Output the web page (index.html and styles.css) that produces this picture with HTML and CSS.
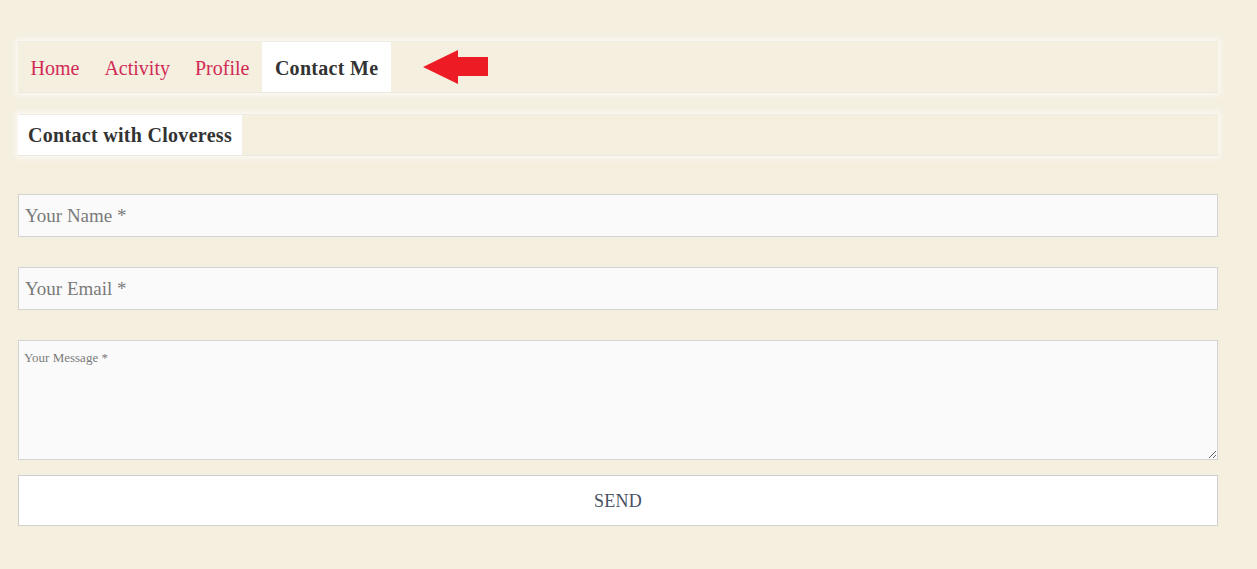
FILE: index.html
```html
<!DOCTYPE html>
<html>
<head>
<meta charset="utf-8">
<link rel="stylesheet" href="styles.css">
</head>
<body>
<div class="page">
  <div class="navwrap">
    <nav class="nav">
      <a class="nav-item">Home</a>
      <a class="nav-item">Activity</a>
      <a class="nav-item">Profile</a>
      <a class="nav-item active">Contact Me</a>
    </nav>
    <svg class="arrow" width="66" height="34" viewBox="0 0 66 34">
      <polygon points="0,17 35,0 35,7 65,7 65,26 35,26 35,34" fill="#ed1c24"/>
    </svg>
  </div>
  <div class="titlebar"><h2 class="title">Contact with Cloveress</h2></div>
  <form class="form">
    <input class="field" type="text" placeholder="Your Name *">
    <input class="field" type="text" placeholder="Your Email *">
    <textarea class="field message" placeholder="Your Message *"></textarea>
    <button class="send" type="button">SEND</button>
  </form>
</div>
</body>
</html>
```
FILE: styles.css
```css
html, body {
  margin: 0;
  padding: 0;
  background: #f5efe0;
}
body {
  font-family: "Liberation Serif", "Times New Roman", serif;
}
.page {
  width: 1200px;
  margin-left: 18px;
  padding-top: 41px;
}
.navwrap {
  position: relative;
}
.nav {
  display: flex;
  height: 50px;
  border-top: 1px solid #efece5;
  border-bottom: 1px solid #ebe8e2;
  box-shadow: 0 0 6px 2px rgba(255,255,255,0.7);
  background: #f5efe0;
}
.nav-item {
  display: flex;
  align-items: center;
  padding: 2px 12.5px 0;
  font-size: 20px;
  color: #d12a55;
}
.nav-item.active {
  background: #fff;
  color: #333;
  font-weight: bold;
  padding: 2px 13px 0;
  letter-spacing: 0.3px;
}
.arrow {
  position: absolute;
  left: 405px;
  top: 9px;
}
.titlebar {
  margin-top: 21px;
  display: flex;
  height: 40px;
  border-top: 1px solid #efece5;
  border-bottom: 1px solid #ebe8e2;
  box-shadow: 0 0 6px 2px rgba(255,255,255,0.7);
}
.title {
  margin: 0;
  background: #fff;
  padding: 1px 10px 0;
  display: flex;
  align-items: center;
  font-size: 20px;
  letter-spacing: 0.3px;
  color: #333;
  font-weight: bold;
}
.form {
  display: flex;
  flex-direction: column;
  margin-top: 38px;
}
.field {
  box-sizing: border-box;
  width: 1200px;
  height: 43px;
  border: 1px solid #d3d3d3;
  background: #fafafa;
  font-family: "Liberation Serif", "Times New Roman", serif;
  font-size: 19px;
  padding: 1px 6px 0;
  margin: 0 0 30px 0;
  color: #555;
  outline: none;
}
.field::placeholder {
  color: #7a7a7a;
}
.message {
  height: 120px;
  font-size: 13px;
  padding: 9px 5px 8px;
  margin-bottom: 15px;
  resize: vertical;
}
.send {
  box-sizing: border-box;
  width: 1200px;
  height: 51px;
  background: #fff;
  border: 1px solid #cfcfcf;
  font-family: "Liberation Serif", "Times New Roman", serif;
  font-size: 18px;
  padding-top: 2px;
  color: #485063;
  letter-spacing: 0.3px;
  cursor: pointer;
}
```
